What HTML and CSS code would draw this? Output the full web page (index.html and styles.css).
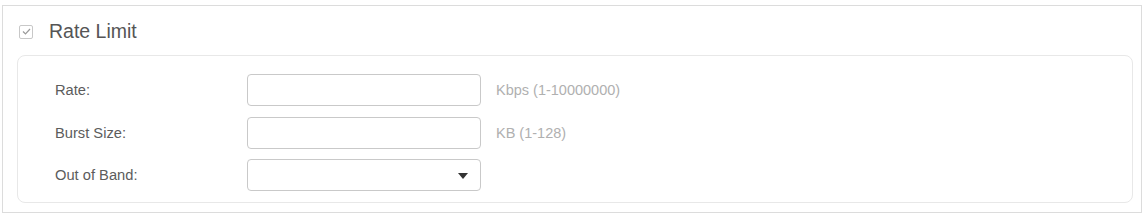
FILE: index.html
```html
<!DOCTYPE html>
<html>
<head>
<meta charset="utf-8">
<link rel="stylesheet" href="styles.css">
</head>
<body>
<div class="panel">
  <div class="panel-head">
    <span class="check">
      <svg width="9" height="7" viewBox="0 0 9 7"><path d="M1 3.5 L3.5 6 L8 1" fill="none" stroke="#9a9a9a" stroke-width="1.2"/></svg>
    </span>
    <span class="title">Rate Limit</span>
  </div>
  <div class="box">
    <div class="row">
      <label class="lbl">Rate:</label>
      <div class="field"></div>
      <span class="hint">Kbps (1-10000000)</span>
    </div>
    <div class="row">
      <label class="lbl">Burst Size:</label>
      <div class="field"></div>
      <span class="hint">KB (1-128)</span>
    </div>
    <div class="row">
      <label class="lbl">Out of Band:</label>
      <div class="field select"><span class="arrow"></span></div>
    </div>
  </div>
</div>
</body>
</html>
```
FILE: styles.css
```css
html, body {
  margin: 0;
  padding: 0;
  background: #fff;
  font-family: "Liberation Sans", Arial, sans-serif;
}
.panel {
  margin: 5px 1px 0 2px;
  border: 1px solid #dcdcdc;
  padding: 0 8px 9px 14px;
}
.panel-head {
  height: 49px;
  display: flex;
  align-items: center;
  padding-top: 2px;
  box-sizing: border-box;
}
.check {
  width: 12px;
  height: 12px;
  margin-left: 2px;
  border: 1px solid #c8c8c8;
  border-radius: 2px;
  display: flex;
  align-items: center;
  justify-content: center;
}
.title {
  margin-left: 16px;
  font-size: 19.5px;
  color: #555;
}
.box {
  border: 1px solid #e8e8e8;
  border-radius: 8px;
  padding: 18px 0 11px 37px;
  display: flex;
  flex-direction: column;
  gap: 10.5px;
}
.row {
  display: flex;
  align-items: center;
  height: 32px;
}
.lbl {
  width: 192px;
  font-size: 14.7px;
  color: #5c5c5c;
}
.field {
  width: 232px;
  height: 30px;
  border: 1px solid #c9c9c9;
  border-radius: 4px;
  position: relative;
}
.hint {
  margin-left: 15px;
  font-size: 14.5px;
  color: #b0b0b0;
}
.arrow {
  position: absolute;
  right: 12px;
  top: 13px;
  width: 0;
  height: 0;
  border-left: 5px solid transparent;
  border-right: 5px solid transparent;
  border-top: 6px solid #333;
}
```
